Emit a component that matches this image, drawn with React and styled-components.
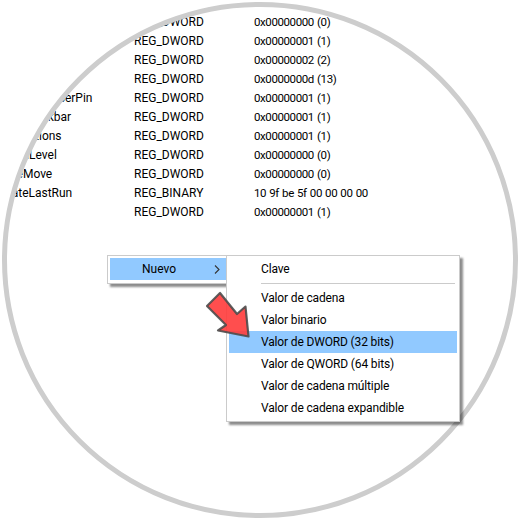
import styled, { createGlobalStyle } from "styled-components";

const rows = [
  { name: "", type: "REG_DWORD", data: "0x00000000 (0)" },
  { name: "", type: "REG_DWORD", data: "0x00000001 (1)" },
  { name: "", type: "REG_DWORD", data: "0x00000002 (2)" },
  { name: "", type: "REG_DWORD", data: "0x0000000d (13)" },
  { name: "StartMigratedBrowserPin", type: "REG_DWORD", data: "0x00000001 (1)" },
  { name: "StoreAppsOnTaskbar", type: "REG_DWORD", data: "0x00000001 (1)" },
  { name: "TaskbarAnimations", type: "REG_DWORD", data: "0x00000001 (1)" },
  { name: "TaskbarGlomLevel", type: "REG_DWORD", data: "0x00000000 (0)" },
  { name: "TaskbarSizeMove", type: "REG_DWORD", data: "0x00000000 (0)" },
  { name: "TaskbarStateLastRun", type: "REG_BINARY", data: "10 9f be 5f 00 00 00 00" },
  { name: "", type: "REG_DWORD", data: "0x00000001 (1)" },
];

const GlobalStyle = createGlobalStyle`
  html, body {
    margin: 0;
    padding: 0;
    background: #fff;
  }
  body {
    font-family: Roboto, "Noto Sans", sans-serif;
    font-size: 12px;
    color: #000;
  }
`;

const Stage = styled.div`
  position: relative;
  width: 520px;
  height: 520px;
  padding: 2px;
  box-sizing: border-box;
  overflow: hidden;
`;

const Circle = styled.div`
  width: 516px;
  height: 516px;
  box-sizing: border-box;
  border: 5px solid #cdcdcd;
  border-radius: 50%;
  overflow: hidden;
  background: #fff;
  padding-top: 6px;
`;

const ValueList = styled.div`
  margin-left: -49px;
`;

const ValueRow = styled.div`
  display: grid;
  grid-template-columns: 176px 120px 1fr;
  height: 19px;
  line-height: 19px;
  white-space: nowrap;
`;

const DataCell = styled.span`
  font-size: 11.5px;
  letter-spacing: -0.4px;
  word-spacing: 0.7px;
`;

const Menu = styled.div`
  position: absolute;
  box-sizing: border-box;
  background: #fff;
  border: 1px solid #cbcbcb;
  box-shadow: 3px 3px 2px rgba(0, 0, 0, 0.45);
`;

const ParentMenu = styled(Menu)`
  left: 107px;
  top: 255px;
  width: 120px;
  height: 29px;
  padding: 2px 0 2px 2px;
`;

const SubMenu = styled(Menu)`
  left: 226px;
  top: 255px;
  width: 234px;
  height: 167px;
  padding: 2px;
`;

const ParentItem = styled.div`
  display: flex;
  align-items: center;
  justify-content: space-between;
  height: 22px;
  padding: 0 6px 0 32px;
  background: #91c9ff;
`;

const Chevron = styled.svg`
  width: 6px;
  height: 9px;
  fill: none;
  stroke: #333;
  stroke-width: 1.1;
`;

const Item = styled.div`
  height: 22px;
  line-height: 22px;
  padding-left: 32px;
  letter-spacing: -0.15px;
  background: ${({ $active }) => ($active ? "#91c9ff" : "transparent")};
`;

const Separator = styled.div`
  height: 1px;
  margin: 3px 2px 3px 32px;
  background: #cbcbcb;
`;

const Arrow = styled.svg`
  position: absolute;
  left: 200px;
  top: 288px;
  width: 56px;
  height: 56px;
`;

export default function App() {
  return (
    <>
      <GlobalStyle />
      <Stage>
        <Circle>
          <ValueList>
            {rows.map((row, i) => (
              <ValueRow key={i}>
                <span>{row.name}</span>
                <span>{row.type}</span>
                <DataCell>{row.data}</DataCell>
              </ValueRow>
            ))}
          </ValueList>
        </Circle>
        <ParentMenu>
          <ParentItem>
            Nuevo
            <Chevron viewBox="0 0 6 9">
              <path d="M1 .5 5 4.5 1 8.5" />
            </Chevron>
          </ParentItem>
        </ParentMenu>
        <SubMenu>
          <Item>Clave</Item>
          <Separator />
          <Item>Valor de cadena</Item>
          <Item>Valor binario</Item>
          <Item $active>Valor de DWORD (32 bits)</Item>
          <Item>Valor de QWORD (64 bits)</Item>
          <Item>Valor de cadena múltiple</Item>
          <Item>Valor de cadena expandible</Item>
        </SubMenu>
        <Arrow viewBox="0 0 56 56">
          <path
            d="M20 5 7 18 26 37 18 42.5 48.5 48.5 45.5 18.5 37 26Z"
            fill="#ff3b3b"
            fillOpacity="0.9"
            stroke="#4d4d4d"
            strokeOpacity="0.9"
            strokeWidth="2.2"
            strokeLinejoin="round"
          />
        </Arrow>
      </Stage>
    </>
  );
}
